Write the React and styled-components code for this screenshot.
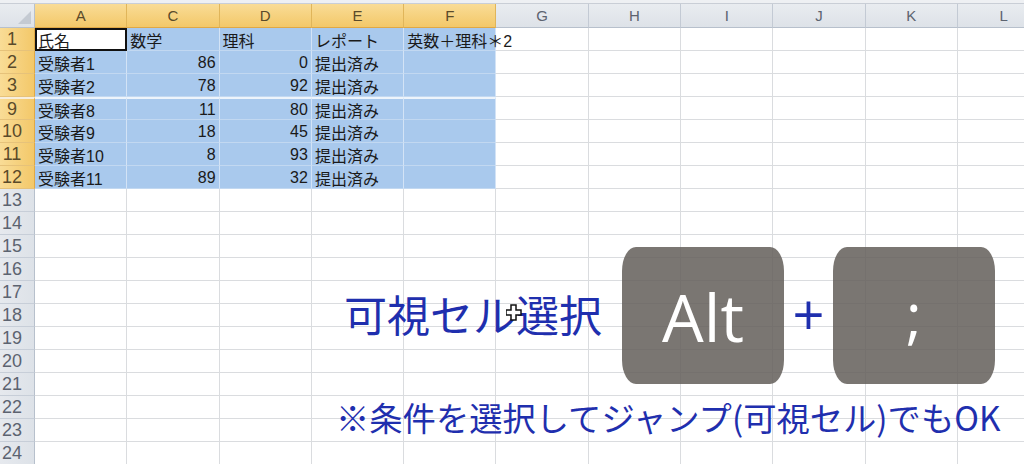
import React from "react";
import styled, { createGlobalStyle } from "styled-components";

const GlobalStyle = createGlobalStyle`
  html, body {
    margin: 0;
    padding: 0;
    background: #ffffff;
    overflow: hidden;
  }
`;

const COLS = ["A", "C", "D", "E", "F", "G", "H", "I", "J", "K", "L"];
const SELECTED_COLS = 5;
const NUMERIC = [1, 2];

const ROWS = [
  { n: 1, cells: ["氏名", "数学", "理科", "レポート", "英数＋理科＊2"] },
  { n: 2, cells: ["受験者1", "86", "0", "提出済み", ""] },
  { n: 3, cells: ["受験者2", "78", "92", "提出済み", ""] },
  { n: 9, gap: true, cells: ["受験者8", "11", "80", "提出済み", ""] },
  { n: 10, cells: ["受験者9", "18", "45", "提出済み", ""] },
  { n: 11, cells: ["受験者10", "8", "93", "提出済み", ""] },
  { n: 12, cells: ["受験者11", "89", "32", "提出済み", ""] },
  ...Array.from({ length: 12 }, (_, i) => ({ n: 13 + i, cells: [] })),
];

const Screen = styled.div`
  position: relative;
  width: 1024px;
  height: 464px;
  overflow: hidden;
  background: #ffffff;
  font-family: "Liberation Sans", "Noto Sans CJK JP", sans-serif;
`;

const TopStrip = styled.div`
  height: 4px;
  background: #eef0f3;
  border-bottom: 1px solid #c9ced6;
  box-sizing: border-box;
`;

const Sheet = styled.div`
  display: grid;
  grid-template-columns: 35px repeat(11, 92.3px);
  grid-auto-rows: 23px;
  grid-template-rows: 24px;
`;

const Corner = styled.div`
  position: relative;
  background: linear-gradient(#e9ecf0, #dde2e8);
  border-right: 1px solid #b7c0cc;
  border-bottom: 1px solid #b7c0cc;
  box-sizing: border-box;
  &::after {
    content: "";
    position: absolute;
    right: 3px;
    bottom: 3px;
    border-left: 13px solid transparent;
    border-bottom: 13px solid #c4cad2;
  }
`;

const ColHead = styled.div`
  display: flex;
  align-items: center;
  justify-content: center;
  font-size: 15px;
  color: ${(p) => (p.$sel ? "#5a4a2a" : "#5c6370")};
  background: ${(p) =>
    p.$sel
      ? "linear-gradient(#f9dc96, #f3c869)"
      : "linear-gradient(#e9ecf0, #dde2e8)"};
  border-right: 1px solid ${(p) => (p.$sel ? "#e0b55a" : "#c3cad4")};
  border-bottom: 1px solid ${(p) => (p.$sel ? "#e0a845" : "#b7c0cc")};
  box-sizing: border-box;
`;

const RowHead = styled.div`
  display: flex;
  align-items: center;
  justify-content: center;
  padding-right: 10px;
  font-size: 18px;
  color: ${(p) => (p.$sel ? "#5a4a2a" : "#5c6370")};
  background: ${(p) =>
    p.$sel
      ? "linear-gradient(90deg, #f9dc96, #f3c869)"
      : "linear-gradient(90deg, #e6e9ee, #dde2e8)"};
  border-right: 1px solid ${(p) => (p.$sel ? "#e0a845" : "#b7c0cc")};
  border-bottom: 1px solid ${(p) => (p.$sel ? "#e6c27a" : "#c7ced8")};
  border-top: ${(p) => (p.$gap ? "2px solid #f7eedd" : "none")};
  box-sizing: border-box;
  line-height: 1;
`;

const Cell = styled.div`
  position: relative;
  display: flex;
  align-items: center;
  justify-content: ${(p) => (p.$num ? "flex-end" : "flex-start")};
  padding: 1px 3px 0;
  font-size: 16px;
  color: #1a1a1a;
  white-space: nowrap;
  overflow: ${(p) => (p.$spill ? "visible" : "hidden")};
  z-index: ${(p) => (p.$spill ? 1 : 0)};
  background: ${(p) => (p.$sel ? "#a9c9ed" : "#ffffff")};
  border-right: 1px solid ${(p) => (p.$sel ? "#d3e3f6" : "#dadcdf")};
  border-bottom: 1px solid ${(p) => (p.$sel ? "#c2d8f1" : "#dadcdf")};
  border-top: ${(p) => (p.$gap ? "2px solid #eef4fb" : "none")};
  box-sizing: border-box;
  ${(p) =>
    p.$active &&
    `
    background: #ffffff;
    outline: 2px solid #111111;
    outline-offset: -2px;
  `}
`;

const Overlay = styled.div`
  position: absolute;
  left: 336px;
  top: 247px;
  width: 680px;
  display: flex;
  flex-direction: column;
  color: #1f2fae;
  font-family: "Noto Sans CJK JP", sans-serif;
`;

const ShortcutRow = styled.div`
  display: flex;
  align-items: center;
`;

const Title = styled.div`
  position: relative;
  width: 286px;
  padding-left: 8px;
  box-sizing: border-box;
  font-size: 43px;
  line-height: 1;
  margin-top: -4px;
`;

const Key = styled.div`
  width: 162px;
  height: 137px;
  display: flex;
  align-items: center;
  justify-content: center;
  background: rgba(100, 96, 91, 0.86);
  border-radius: 14px / 24px;
  color: #ffffff;
  font-family: "Open Sans", "DejaVu Sans", sans-serif;
  font-size: ${(p) => p.$size || 66}px;
  line-height: 1;
  padding-bottom: ${(p) => p.$lift || 0}px;
  box-sizing: border-box;
`;

const Plus = styled.div`
  width: 49px;
  text-align: center;
  font-family: "Open Sans", sans-serif;
  font-size: 56px;
  line-height: 1;
  margin-top: -6px;
`;

const Note = styled.div`
  margin-top: 16px;
  font-size: 33.3px;
  line-height: 1;
  white-space: nowrap;
`;

const Pointer = styled.svg`
  position: absolute;
  left: 170px;
  top: 12px;
`;

function CursorCross() {
  return (
    <Pointer width="16" height="17" viewBox="0 0 16 17">
      <path
        d="M5 1h5v5h5v5h-5v5H5v-5H0V6h5z"
        fill="#ffffff"
        stroke="#111111"
        strokeWidth="1.5"
      />
    </Pointer>
  );
}

export default function App() {
  return (
    <Screen>
      <GlobalStyle />
      <TopStrip />
      <Sheet>
        <Corner />
        {COLS.map((c, i) => (
          <ColHead key={c} $sel={i < SELECTED_COLS}>
            {c}
          </ColHead>
        ))}
        {ROWS.map((row) => {
          const sel = row.n <= 12;
          return (
            <React.Fragment key={row.n}>
              <RowHead $sel={sel} $gap={row.gap}>
                {row.n}
              </RowHead>
              {COLS.map((c, i) => (
                <Cell
                  key={c}
                  $sel={sel && i < SELECTED_COLS}
                  $num={NUMERIC.includes(i) && row.n > 1}
                  $active={row.n === 1 && i === 0}
                  $spill={row.n === 1 && i === 4}
                  $gap={row.gap && i < SELECTED_COLS}
                >
                  {row.cells[i] || ""}
                </Cell>
              ))}
            </React.Fragment>
          );
        })}
      </Sheet>
      <Overlay>
        <ShortcutRow>
          <Title>
            可視セル選択
            <CursorCross />
          </Title>
          <Key>Alt</Key>
          <Plus>+</Plus>
          <Key $size={60} $lift={4}>;</Key>
        </ShortcutRow>
        <Note>※条件を選択してジャンプ(可視セル)でもOK</Note>
      </Overlay>
    </Screen>
  );
}
